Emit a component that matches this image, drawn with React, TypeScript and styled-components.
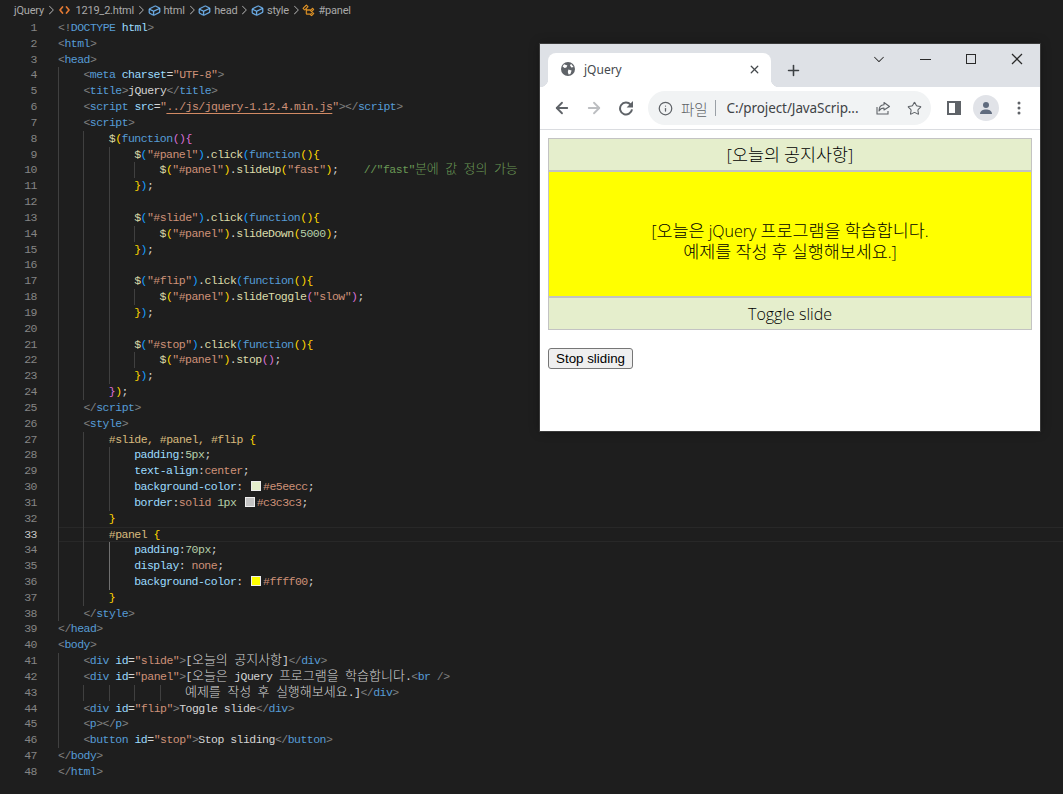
import React from 'react'
import styled, { createGlobalStyle } from 'styled-components'
import { VscChevronRight, VscSymbolClass, VscSymbolField, VscChromeMinimize, VscChromeMaximize, VscChromeClose, VscChevronDown } from 'react-icons/vsc'
import { ArrowLeft, ArrowRight, Info, Star, Plus, X } from 'lucide-react'

const GlobalStyle = createGlobalStyle`
  html, body { margin: 0; padding: 0; background: #1e1e1e; }
  body { width: 1063px; height: 794px; overflow: hidden; position: relative; }
`

const colors: Record<string, string> = {
  t: '#808080', n: '#569cd6', a: '#9cdcfe', s: '#ce9178', u: '#ce9178', x: '#d4d4d4', f: '#dcdcaa',
  y: '#ffd700', p: '#da70d6', b: '#179fff', k: '#569cd6', c: '#6a9955', e: '#d7ba7d', v: '#ce9178',
  m: '#b5cea8', o: '#d4d4d4',
}

const Editor = styled.div`
  width: 1063px;
  height: 794px;
  background: #1e1e1e;
  overflow: hidden;
`

const Crumbs = styled.div`
  display: flex;
  align-items: center;
  height: 20px;
  padding-left: 14px;
  font: 11px "Roboto", sans-serif;
  letter-spacing: -0.2px;
  color: #a9a9a9;
  white-space: nowrap;
`

const CrumbItem = styled.span<{ $c?: string }>`
  display: inline-flex;
  align-items: center;
  gap: 3px;
  svg { color: ${(p) => p.$c || '#a9a9a9'}; stroke: currentColor; stroke-width: 0.4; }
`

const Sep = styled(VscChevronRight)`
  margin-right: -0.5px;
  color: #a9a9a9;
`

const Row = styled.div`
  display: flex;
  height: 15.83px;
  line-height: 15.83px;
  box-sizing: border-box;
`

const LineNo = styled.div<{ $active?: boolean }>`
  width: 37px;
  flex: none;
  text-align: right;
  font: 11.5px/15.83px "Liberation Mono", monospace;
  letter-spacing: -0.52px;
  color: ${(p) => (p.$active ? '#c6c6c6' : '#858585')};
`

const Code = styled.div<{ $active?: boolean }>`
  flex: 1;
  display: flex;
  margin-left: 21px;
  white-space: pre;
  font: 11.5px/15.83px "Liberation Mono", monospace;
  letter-spacing: -0.52px;
  box-shadow: ${(p) => (p.$active ? 'inset 0 1px 0 #282828, inset 0 -1px 0 #282828' : 'none')};
`

const Guide = styled.span<{ $active?: boolean }>`
  flex: none;
  width: 25.4px;
  box-sizing: border-box;
  border-left: 1px solid ${(p) => (p.$active ? '#707070' : '#404040')};
`

const Token = styled.span<{ $k: string }>`
  color: ${(p) => colors[p.$k]};
  ${(p) => (p.$k === 'u' ? 'text-decoration: underline; text-underline-offset: 3px; text-decoration-color: #d18a64;' : '')}
`

const Hangul = styled.span`
  font-family: "Noto Sans CJK KR", sans-serif;
  font-size: 13px;
  font-weight: 300;
  line-height: 0;
  letter-spacing: 0;
`

const Swatch = styled.span<{ $c: string }>`
  display: inline-block;
  width: 8px;
  height: 8px;
  margin: 0 2px 0 2px;
  border: 1px solid #eee;
  background: ${(p) => p.$c};
  vertical-align: -1px;
`

type Tok = [string, string]
type Line = { g?: number; hot?: number; active?: boolean; toks?: Tok[] }

const tag = (open: string, name: string): Tok[] => [['t', open], ['n', name]]
const end = (name: string): Tok[] => [['t', '</'], ['n', name], ['t', '>']]
const blockOpen = (id: string): Tok[] => [
  ['f', '$'], ['b', '('], ['s', `"#${id}"`], ['b', ')'], ['o', '.'], ['f', 'click'], ['b', '('], ['k', 'function'], ['y', '()'], ['y', '{'],
]

const lines: Line[] = [
  { toks: [['t', '<!'], ['n', 'DOCTYPE'], ['o', ' '], ['a', 'html'], ['t', '>']] },
  { toks: [...tag('<', 'html'), ['t', '>']] },
  { toks: [...tag('<', 'head'), ['t', '>']] },
  { g: 1, toks: [...tag('<', 'meta'), ['o', ' '], ['a', 'charset'], ['o', '='], ['s', '"UTF-8"'], ['t', '>']] },
  { g: 1, toks: [...tag('<', 'title'), ['t', '>'], ['x', 'jQuery'], ...end('title')] },
  { g: 1, toks: [...tag('<', 'script'), ['o', ' '], ['a', 'src'], ['o', '='], ['s', '"'], ['u', '../js/jquery-1.12.4.min.js'], ['s', '"'], ['t', '>'], ...end('script')] },
  { g: 1, toks: [...tag('<', 'script'), ['t', '>']] },
  { g: 2, toks: [['f', '$'], ['y', '('], ['k', 'function'], ['p', '()'], ['p', '{']] },
  { g: 3, toks: blockOpen('panel') },
  { g: 4, toks: [['f', '$'], ['y', '('], ['s', '"#panel"'], ['y', ')'], ['o', '.'], ['f', 'slideUp'], ['y', '('], ['s', '"fast"'], ['y', ')'], ['o', ';    '], ['c', '//"fast"분에 값 정의 가능']] },
  { g: 3, toks: [['y', '}'], ['b', ')'], ['o', ';']] },
  { g: 3 },
  { g: 3, toks: blockOpen('slide') },
  { g: 4, toks: [['f', '$'], ['y', '('], ['s', '"#panel"'], ['y', ')'], ['o', '.'], ['f', 'slideDown'], ['y', '('], ['m', '5000'], ['y', ')'], ['o', ';']] },
  { g: 3, toks: [['y', '}'], ['b', ')'], ['o', ';']] },
  { g: 3 },
  { g: 3, toks: blockOpen('flip') },
  { g: 4, toks: [['f', '$'], ['y', '('], ['s', '"#panel"'], ['y', ')'], ['o', '.'], ['f', 'slideToggle'], ['p', '('], ['s', '"slow"'], ['p', ')'], ['o', ';']] },
  { g: 3, toks: [['y', '}'], ['b', ')'], ['o', ';']] },
  { g: 3 },
  { g: 3, toks: blockOpen('stop') },
  { g: 4, toks: [['f', '$'], ['y', '('], ['s', '"#panel"'], ['y', ')'], ['o', '.'], ['f', 'stop'], ['p', '()'], ['o', ';']] },
  { g: 3, toks: [['y', '}'], ['b', ')'], ['o', ';']] },
  { g: 2, toks: [['p', '}'], ['y', ')'], ['o', ';']] },
  { g: 1, toks: end('script') },
  { g: 1, toks: [...tag('<', 'style'), ['t', '>']] },
  { g: 2, toks: [['e', '#slide, #panel, #flip'], ['o', ' '], ['y', '{']] },
  { g: 3, toks: [['a', 'padding'], ['o', ':'], ['m', '5px'], ['o', ';']] },
  { g: 3, toks: [['a', 'text-align'], ['o', ':'], ['v', 'center'], ['o', ';']] },
  { g: 3, toks: [['a', 'background-color'], ['o', ': '], ['#e5eecc', ''], ['v', '#e5eecc'], ['o', ';']] },
  { g: 3, toks: [['a', 'border'], ['o', ':'], ['v', 'solid'], ['o', ' '], ['m', '1px'], ['o', ' '], ['#c3c3c3', ''], ['v', '#c3c3c3'], ['o', ';']] },
  { g: 2, toks: [['y', '}']] },
  { g: 2, active: true, toks: [['e', '#panel'], ['o', ' '], ['y', '{']] },
  { g: 3, hot: 2, toks: [['a', 'padding'], ['o', ':'], ['m', '70px'], ['o', ';']] },
  { g: 3, hot: 2, toks: [['a', 'display'], ['o', ': '], ['v', 'none'], ['o', ';']] },
  { g: 3, hot: 2, toks: [['a', 'background-color'], ['o', ': '], ['#ffff00', ''], ['v', '#ffff00'], ['o', ';']] },
  { g: 2, toks: [['y', '}']] },
  { g: 1, toks: end('style') },
  { toks: end('head') },
  { toks: [...tag('<', 'body'), ['t', '>']] },
  { g: 1, toks: [...tag('<', 'div'), ['o', ' '], ['a', 'id'], ['o', '='], ['s', '"slide"'], ['t', '>'], ['x', '[오늘의 공지사항]'], ...end('div')] },
  { g: 1, toks: [...tag('<', 'div'), ['o', ' '], ['a', 'id'], ['o', '='], ['s', '"panel"'], ['t', '>'], ['x', '[오늘은 jQuery 프로그램을 학습합니다.'], ...tag('<', 'br'), ['t', ' />']] },
  { g: 5, toks: [['x', '예제를 작성 후 실행해보세요.]'], ...end('div')] },
  { g: 1, toks: [...tag('<', 'div'), ['o', ' '], ['a', 'id'], ['o', '='], ['s', '"flip"'], ['t', '>'], ['x', 'Toggle slide'], ...end('div')] },
  { g: 1, toks: [...tag('<', 'p'), ['t', '>'], ...end('p')] },
  { g: 1, toks: [...tag('<', 'button'), ['o', ' '], ['a', 'id'], ['o', '='], ['s', '"stop"'], ['t', '>'], ['x', 'Stop sliding'], ...end('button')] },
  { toks: end('body') },
  { toks: end('html') },
]

// hangul runs get their own font so that they keep the width they have in the editor
const withHangul = (text: string) =>
  text.split(/([\uac00-\ud7a3]+)/).map((part, i) => (i % 2 ? <Hangul key={i}>{part}</Hangul> : part))

const Browser = styled.div`
  position: absolute;
  left: 540px;
  top: 44px;
  width: 500px;
  height: 387px;
  background: #fff;
  box-shadow: 0 0 0 1px #3a3a3a, 0 0 10px rgba(0, 0, 0, 0.35);
  display: flex;
  flex-direction: column;
`

const TabStrip = styled.div`
  height: 43px;
  flex: none;
  display: flex;
  background: #dee1e6;
  padding-left: 8px;
`

const Tab = styled.div`
  position: relative;
  width: 223px;
  height: 34px;
  margin-top: 9px;
  box-sizing: border-box;
  padding: 0 10px 2px 13px;
  display: flex;
  align-items: center;
  background: #fff;
  border-radius: 8px 8px 0 0;
  font: 12px "Noto Sans", sans-serif;
  color: #45494d;

  &::before, &::after {
    content: "";
    position: absolute;
    bottom: 0;
    width: 8px;
    height: 8px;
  }
  &::before { left: -8px; background: radial-gradient(circle at 0 0, #dee1e6 8px, #fff 8.5px); }
  &::after { right: -8px; background: radial-gradient(circle at 100% 0, #dee1e6 8px, #fff 8.5px); }
`

const TabTitle = styled.span`
  flex: 1;
  margin-left: 9px;
`

const NewTab = styled.div`
  display: flex;
  align-items: center;
  margin: 9px 0 0 14px;
  color: #3c4043;
`

const WinControls = styled.div`
  display: flex;
  margin-left: auto;
`

const WinBtn = styled.div`
  width: 46px;
  height: 30px;
  display: flex;
  align-items: center;
  justify-content: center;
  color: #2a2a2a;
`

const Toolbar = styled.div`
  height: 43px;
  flex: none;
  box-sizing: border-box;
  display: flex;
  align-items: center;
  padding-left: 8px;
  border-bottom: 1px solid #dadce0;
  background: #fff;
`

const ToolBtn = styled.div<{ $gap?: number; $c?: string }>`
  width: 28px;
  height: 28px;
  flex: none;
  margin-left: ${(p) => p.$gap || 0}px;
  display: flex;
  align-items: center;
  justify-content: center;
  color: ${(p) => p.$c || '#5f6368'};
`

const Omnibox = styled.div`
  width: 283px;
  height: 34px;
  margin-left: 8px;
  box-sizing: border-box;
  flex: none;
  display: flex;
  align-items: center;
  padding: 0 9px 0 10px;
  border-radius: 17px;
  background: #f1f3f4;
  color: #5f6368;
  font: 13.5px "Noto Sans", "Noto Sans CJK KR", sans-serif;
  letter-spacing: -0.1px;
  white-space: nowrap;
`

const Scheme = styled.span`
  margin-left: 8px;
  font-family: "Noto Sans CJK KR", sans-serif;
  font-size: 14.5px;
  font-weight: 300;
`

const Divider = styled.span`
  width: 1px;
  height: 16px;
  margin: 0 10px 0 8px;
  background: #9aa0a6;
`

const Url = styled.span`
  color: #3f4346;
`

const OmniIcons = styled.div`
  margin-left: auto;
  display: flex;
  align-items: center;
  gap: 16px;
`

const Page = styled.div`
  flex: 1;
  padding: 8px;
  background: #fff;
  color: #000;
  font: 300 16px "Open Sans", sans-serif;
`

const PageHangul = styled.span`
  font-family: "Noto Sans CJK KR", sans-serif;
  font-size: 17.4px;
  font-weight: 300;
  line-height: 0;
`

const Flap = styled.div`
  box-sizing: border-box;
  height: 33px;
  padding: 5px;
  line-height: 22px;
  text-align: center;
  background: #e5eecc;
  border: 1px solid #c3c3c3;
`

const Panel = styled.div`
  box-sizing: border-box;
  height: 126px;
  display: flex;
  flex-direction: column;
  justify-content: center;
  line-height: 21px;
  padding-top: 15px;
  text-align: center;
  background: #ffff00;
  border: 1px solid #c3c3c3;
`

const StopButton = styled.button`
  display: block;
  width: 85px;
  height: 21px;
  margin-top: 18px;
  padding: 0;
  background: #efefef;
  border: 1px solid #767676;
  border-radius: 3px;
  color: #000;
  font: 13.33px "Liberation Sans", sans-serif;
`

const Avatar = styled.div`
  width: 26px;
  height: 26px;
  border-radius: 50%;
  background: #e1e3e8;
  display: flex;
  align-items: center;
  justify-content: center;
`

const pageText = (text: string) =>
  text.split(/([\uac00-\ud7a3]+)/).map((part, i) => (i % 2 ? <PageHangul key={i}>{part}</PageHangul> : part))

const App = () => (
  <>
    <GlobalStyle />
    <Editor>
      <Crumbs>
        <CrumbItem>jQuery</CrumbItem>
        <Sep size={14} />
        <CrumbItem $c="#e37933">
          <svg width="15" height="14" viewBox="0 0 15 14" fill="none" strokeLinecap="round" strokeLinejoin="round">
            <path d="M5.5 4 3 7l2.5 3M9.5 4 12 7l-2.5 3" style={{ strokeWidth: 1.7 }} />
          </svg>
          1219_2.html
        </CrumbItem>
        <Sep size={14} />
        <CrumbItem $c="#75beff"><VscSymbolField size={13} />html</CrumbItem>
        <Sep size={14} />
        <CrumbItem $c="#75beff"><VscSymbolField size={13} />head</CrumbItem>
        <Sep size={14} />
        <CrumbItem $c="#75beff"><VscSymbolField size={13} />style</CrumbItem>
        <Sep size={14} />
        <CrumbItem $c="#ee9d28"><VscSymbolClass size={13} />#panel</CrumbItem>
      </Crumbs>
      {lines.map((line, i) => (
        <Row key={i}>
          <LineNo $active={line.active}>{i + 1}</LineNo>
          <Code $active={line.active}>
            {Array.from({ length: line.g || 0 }, (_, g) => (
              <Guide key={g} $active={line.hot === g} />
            ))}
            <span>
              {(line.toks || []).map(([k, text], j) =>
                k.startsWith('#') ? (
                  <Swatch key={j} $c={k} />
                ) : (
                  <Token key={j} $k={k}>{withHangul(text)}</Token>
                ),
              )}
            </span>
          </Code>
        </Row>
      ))}
    </Editor>

    <Browser>
      <TabStrip>
        <Tab>
          <svg width="14" height="14" viewBox="0 0 14 14">
            <circle cx="7" cy="7" r="7" fill="#5f6368" />
            <path d="M3 2.2 6.4 3.6 5.4 5.6 3.6 6 1.6 4.6ZM7.4 7.4 10.6 8.4 9.4 12 7.6 12.4 6.8 10ZM10 1.8 12.6 5 10.4 5.4 9 3.6Z" fill="#fff" />
          </svg>
          <TabTitle>jQuery</TabTitle>
          <X size={13} strokeWidth={2.4} color="#45494d" />
        </Tab>
        <NewTab><Plus size={17} strokeWidth={2.2} /></NewTab>
        <WinControls>
          <WinBtn><VscChevronDown size={16} /></WinBtn>
          <WinBtn><VscChromeMinimize size={16} /></WinBtn>
          <WinBtn><VscChromeMaximize size={16} /></WinBtn>
          <WinBtn><VscChromeClose size={16} /></WinBtn>
        </WinControls>
      </TabStrip>

      <Toolbar>
        <ToolBtn><ArrowLeft size={18} strokeWidth={2.4} /></ToolBtn>
        <ToolBtn $gap={4} $c="#bcbec1"><ArrowRight size={18} strokeWidth={2.4} /></ToolBtn>
        <ToolBtn $gap={4}>
          <svg width="16" height="16" viewBox="0 0 16 16" fill="none">
            <path d="M12.6 4.6A6 6 0 1 0 14 9.4" stroke="#5f6368" strokeWidth="2" />
            <path d="M15 1v6.4H8.6Z" fill="#5f6368" />
          </svg>
        </ToolBtn>
        <Omnibox>
          <Info size={15} strokeWidth={2} />
          <Scheme>파일</Scheme>
          <Divider />
          <Url>C:/project/JavaScrip...</Url>
          <OmniIcons>
            <svg width="16" height="16" viewBox="0 0 16 16" fill="none" stroke="#5f6368" strokeWidth="1.1">
              <path d="M2 7v7h11v-3" />
              <path d="M9 2.5 14.5 6.5 9 10V8C6.5 8 5 9 4 11 4 7.5 6 5 9 4.8Z" strokeLinejoin="round" />
            </svg>
            <Star size={15} strokeWidth={1.7} />
          </OmniIcons>
        </Omnibox>
        <ToolBtn $gap={9}>
          <svg width="14" height="14" viewBox="0 0 14 14">
            <path d="M0 0h14v14H0ZM2 2v10h6V2Z" fill="#5f6368" fillRule="evenodd" />
          </svg>
        </ToolBtn>
        <ToolBtn $gap={4}>
          <Avatar>
            <svg width="14" height="14" viewBox="0 0 14 14" fill="#5f6b7e">
              <circle cx="7" cy="4" r="3" />
              <path d="M1 13c0-3.4 3-4.6 6-4.6s6 1.2 6 4.6Z" />
            </svg>
          </Avatar>
        </ToolBtn>
        <ToolBtn $gap={5}>
          <svg width="4" height="14" viewBox="0 0 4 14" fill="#5f6368">
            <circle cx="2" cy="2" r="1.5" />
            <circle cx="2" cy="7" r="1.5" />
            <circle cx="2" cy="12" r="1.5" />
          </svg>
        </ToolBtn>
      </Toolbar>

      <Page>
        <Flap>{pageText('[오늘의 공지사항]')}</Flap>
        <Panel>
          <div>{pageText('[오늘은 jQuery 프로그램을 학습합니다.')}</div>
          <div>{pageText('예제를 작성 후 실행해보세요.]')}</div>
        </Panel>
        <Flap>Toggle slide</Flap>
        <StopButton>Stop sliding</StopButton>
      </Page>
    </Browser>
  </>
)

export default App
